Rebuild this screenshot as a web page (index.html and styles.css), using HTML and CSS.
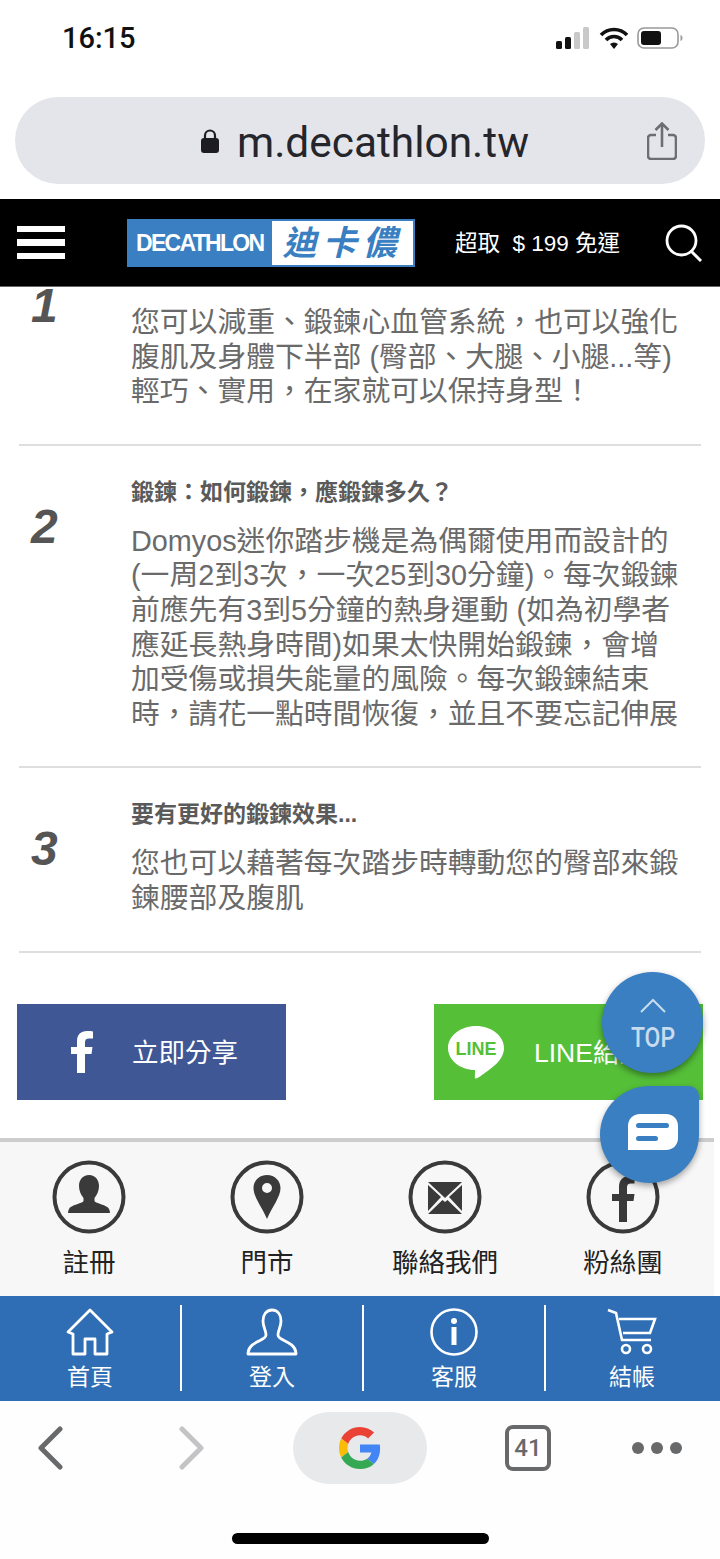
FILE: index.html
```html
<!DOCTYPE html>
<html lang="zh-Hant">
<head>
  <meta charset="UTF-8">
  <meta name="viewport" content="width=device-width, initial-scale=1.0">
  <title>Decathlon</title>
  <link rel="stylesheet" href="styles.css">
</head>
<body>
  <div class="status-bar">
    <span class="time">16:15</span>
    <div class="status-icons">
      <svg width="36" height="22" viewBox="0 0 36 22"><rect x="1" y="14" width="6" height="8" rx="1.5" fill="#111"/><rect x="10" y="10" width="6" height="12" rx="1.5" fill="#111"/><rect x="19" y="5" width="6" height="17" rx="1.5" fill="#c9c9c9"/><rect x="28" y="0" width="6" height="22" rx="1.5" fill="#c9c9c9"/></svg>
      <svg width="30" height="22" viewBox="0 0 30 22"><path d="M2 8a18 18 0 0 1 26 0M7 13a11 11 0 0 1 16 0" fill="none" stroke="#111" stroke-width="3.6"/><path d="M11 17a6 6 0 0 1 8 0l-4 5z" fill="#111"/></svg>
      <svg width="46" height="22" viewBox="0 0 46 22"><rect x="1" y="1" width="40" height="20" rx="6" fill="none" stroke="#999" stroke-width="1.6"/><rect x="4" y="4" width="20" height="14" rx="3" fill="#111"/><path d="M43.500 8v6c1.500-.5 2-1.700 2-3s-.5-2.500-2-3z" fill="#999"/></svg>
    </div>
  </div>

  <div class="url-wrap">
    <div class="url-bar">
      <svg class="lock" width="20" height="26" viewBox="0 0 20 26"><path d="M5 11V7.500a5 5 0 0 1 10 0V11" fill="none" stroke="#1c1c22" stroke-width="2.200"/><rect x="1" y="10" width="18" height="15" rx="3" fill="#1c1c22"/></svg>
      <span class="url-text">m.decathlon.tw</span>
      <svg class="share" width="30" height="38" viewBox="0 0 30 38"><path d="M9 13H4a3 3 0 0 0-3 3v18a3 3 0 0 0 3 3h22a3 3 0 0 0 3-3V16a3 3 0 0 0-3-3h-5" fill="none" stroke="#6b6e73" stroke-width="2.600"/><path d="M15 25V2M8.500 8 15 1.500 21.500 8" fill="none" stroke="#6b6e73" stroke-width="2.600"/></svg>
    </div>
  </div>

  <header class="site-header">
    <div class="burger"><span></span><span></span><span></span></div>
    <div class="logo">
      <span class="logo-en">DECATHLON</span>
      <span class="logo-zh">迪卡儂</span>
    </div>
    <span class="promo">超取 &nbsp;$ 199 免運</span>
    <svg class="search" width="38" height="38" viewBox="0 0 38 38"><circle cx="16.500" cy="16.500" r="14.500" fill="none" stroke="#fff" stroke-width="2.800"/><path d="M26 27l10 10" stroke="#fff" stroke-width="3"/></svg>
  </header>

  <main class="content">
    <section class="step step-cut">
      <div class="step-num">1</div>
      <div class="step-body">
        <p class="step-text">您可以減重、鍛鍊心血管系統，也可以強化<br>腹肌及身體下半部 (臀部、大腿、小腿...等)<br>輕巧、實用，在家就可以保持身型！</p>
      </div>
    </section>
    <section class="step">
      <div class="step-num">2</div>
      <div class="step-body">
        <h3 class="step-title">鍛鍊：如何鍛鍊，應鍛鍊多久？</h3>
        <p class="step-text">Domyos迷你踏步機是為偶爾使用而設計的<br>(一周2到3次，一次25到30分鐘)。每次鍛鍊<br>前應先有3到5分鐘的熱身運動 (如為初學者<br>應延長熱身時間)如果太快開始鍛鍊，會增<br>加受傷或損失能量的風險。每次鍛鍊結束<br>時，請花一點時間恢復，並且不要忘記伸展</p>
      </div>
    </section>
    <section class="step">
      <div class="step-num">3</div>
      <div class="step-body">
        <h3 class="step-title">要有更好的鍛鍊效果...</h3>
        <p class="step-text">您也可以藉著每次踏步時轉動您的臀部來鍛<br>鍊腰部及腹肌</p>
      </div>
    </section>

    <div class="share-row">
      <a class="share-btn share-fb">
        <svg width="24" height="42" viewBox="0 0 24 42"><path d="M7 42V23H1v-7h6v-6C7 3.500 11 0 17 0c2.500 0 4.800.2 6 .4v7h-4c-3 0-4 1.500-4 4V16h7.500l-1 7H15v19z" fill="#fff"/></svg>
        <span>立即分享</span>
      </a>
      <a class="share-btn share-line">
        <svg width="58" height="54" viewBox="0 0 58 54"><path d="M29 1c15.500 0 28 9.800 28 22 0 12-12 20-22 27-3 2-4.500 3.500-6.500 3.500-1 0-.5-2.500-.5-8.500C13 45 1 35 1 23 1 10.800 13.500 1 29 1z" fill="#fff"/><text x="29" y="29.500" text-anchor="middle" class="line-word">LINE</text></svg>
        <span>LINE給好友</span>
      </a>
    </div>
  </main>

  <footer class="quick-links">
    <a class="quick-link">
      <svg width="74" height="74" viewBox="0 0 74 74"><circle cx="37" cy="37" r="34.500" fill="none" stroke="#3a3a3a" stroke-width="4"/><path d="M37 15c6.500 0 10 5 10 11 0 5-2 9-4.500 12v3c1 2.500 13 4 14.500 8 1 2 1 4 1 4H16s0-2 1-4c1.500-4 13.500-5.500 14.500-8v-3C29 35 27 31 27 26c0-6 3.500-11 10-11z" fill="#3a3a3a"/></svg>
      <span>註冊</span>
    </a>
    <a class="quick-link">
      <svg width="74" height="74" viewBox="0 0 74 74"><circle cx="37" cy="37" r="34.500" fill="none" stroke="#3a3a3a" stroke-width="4"/><path fill-rule="evenodd" d="M37 15c8 0 13.500 6 13.500 13 0 9-8.500 19-13.500 31-5-12-13.500-22-13.500-31 0-7 5.500-13 13.500-13zm0 8a5 5 0 1 0 0 10 5 5 0 0 0 0-10z" fill="#3a3a3a"/></svg>
      <span>門市</span>
    </a>
    <a class="quick-link">
      <svg width="74" height="74" viewBox="0 0 74 74"><circle cx="37" cy="37" r="34.500" fill="none" stroke="#3a3a3a" stroke-width="4"/><path d="M20 22h34L37 38zM20 25v26l13-14zM54 25v26L41 37zM20 54h34L39.500 40 37 42l-2.500-2z" fill="#3a3a3a"/></svg>
      <span>聯絡我們</span>
    </a>
    <a class="quick-link">
      <svg width="74" height="74" viewBox="0 0 74 74"><circle cx="37" cy="37" r="34.500" fill="none" stroke="#3a3a3a" stroke-width="4"/><path d="M33 62V41h-7v-7h7v-7c0-7 4-11 10-11 2.500 0 4.500.2 5.500.4v7H45c-3 0-4 1.500-4 4V34h7.500l-1 7H41v21z" fill="#3a3a3a"/></svg>
      <span>粉絲團</span>
    </a>
  </footer>

  <nav class="bottom-nav">
    <a class="nav-item">
      <svg width="50" height="48" viewBox="0 0 50 48"><path d="M3 24 25 2l22 22-5 2v20H30V31H20v15H8V26z" fill="none" stroke="#fff" stroke-width="2.800" stroke-linejoin="round"/></svg>
      <span>首頁</span>
    </a>
    <a class="nav-item">
      <svg width="52" height="48" viewBox="0 0 52 48"><path d="M26 2c6 0 9 5 9 11 0 6-3 9-3 14 0 6 17 6 18 18v1H2v-1c1-12 18-12 18-18 0-5-3-8-3-14C17 7 20 2 26 2z" fill="none" stroke="#fff" stroke-width="2.800" stroke-linejoin="round"/></svg>
      <span>登入</span>
    </a>
    <a class="nav-item">
      <svg width="48" height="48" viewBox="0 0 48 48"><circle cx="24" cy="24" r="22.500" fill="none" stroke="#fff" stroke-width="2.600"/><circle cx="24" cy="13" r="3" fill="#fff"/><rect x="21.500" y="19" width="5" height="18" fill="#fff"/></svg>
      <span>客服</span>
    </a>
    <a class="nav-item">
      <svg width="50" height="48" viewBox="0 0 50 48"><path d="M1 2l8 3 6 27h29M12 11h36l-5 14H16" fill="none" stroke="#fff" stroke-width="2.600"/><circle cx="19" cy="41" r="4" fill="none" stroke="#fff" stroke-width="2.600"/><circle cx="40" cy="41" r="4" fill="none" stroke="#fff" stroke-width="2.600"/></svg>
      <span>結帳</span>
    </a>
  </nav>

  <div class="browser-bar">
    <div class="browser-row">
      <svg width="26" height="44" viewBox="0 0 26 44"><path d="M23 3 4 22l19 19" fill="none" stroke="#68696b" stroke-width="5" stroke-linecap="round" stroke-linejoin="round"/></svg>
      <svg class="forward" width="26" height="44" viewBox="0 0 26 44"><path d="M3 3l19 19L3 41" fill="none" stroke="#c4c4c6" stroke-width="5" stroke-linecap="round" stroke-linejoin="round"/></svg>
      <div class="google-pill">
        <svg width="42" height="42" viewBox="0 0 48 48"><path fill="#EA4335" d="M24 9.500c3.540 0 6.710 1.220 9.210 3.600l6.850-6.850C35.900 2.380 30.470 0 24 0 14.620 0 6.510 5.380 2.560 13.220l7.980 6.190C12.430 13.720 17.740 9.500 24 9.500z"/><path fill="#4285F4" d="M46.980 24.550c0-1.570-.15-3.090-.38-4.550H24v9.020h12.940c-.58 2.960-2.260 5.480-4.780 7.180l7.730 6c4.510-4.180 7.090-10.360 7.090-17.650z"/><path fill="#FBBC05" d="M10.530 28.590c-.48-1.450-.76-2.990-.76-4.590s.27-3.140.76-4.590l-7.980-6.190C.92 16.460 0 20.120 0 24c0 3.880.92 7.540 2.560 10.780l7.970-6.190z"/><path fill="#34A853" d="M24 48c6.480 0 11.930-2.130 15.890-5.810l-7.730-6c-2.150 1.450-4.920 2.300-8.160 2.300-6.260 0-11.570-4.220-13.470-9.910l-7.980 6.190C6.510 42.620 14.620 48 24 48z"/></svg>
      </div>
      <div class="tab-count">41</div>
      <div class="more-dots"><span></span><span></span><span></span></div>
    </div>
    <div class="home-indicator"></div>
  </div>

  <a class="fab-top">
    <svg width="26" height="15" viewBox="0 0 26 15"><path d="M1 14 13 2l12 12" fill="none" stroke="#c9dcef" stroke-width="2"/></svg>
    <span>TOP</span>
  </a>
  <a class="fab-chat">
    <svg width="50" height="36" viewBox="0 0 50 36"><path d="M12 0h26c7 0 12 5 12 12v12c0 7-5 12-12 12H0V12C0 5 5 0 12 0z" fill="#fff"/><rect x="8" y="9" width="33" height="5" rx="2.500" fill="#3a7fc1"/><rect x="8" y="22" width="22" height="5" rx="2.500" fill="#3a7fc1"/></svg>
  </a>
</body>
</html>
```

FILE: styles.css
```css
* {
  box-sizing: border-box;
}

html, body {
  margin: 0;
  padding: 0;
}

body {
  position: relative;
  width: 720px;
  height: 1559px;
  overflow: hidden;
  display: flex;
  flex-direction: column;
  background: #fff;
  font-family: "Liberation Sans", "Noto Sans CJK TC", sans-serif;
}

svg {
  display: block;
  flex-shrink: 0;
}

/* phone status bar */
.status-bar {
  height: 76px;
  flex: none;
  display: flex;
  align-items: center;
  justify-content: space-between;
  padding: 0 37px 0 62px;
}

.time {
  font-family: Roboto, "Liberation Sans", sans-serif;
  font-size: 29px;
  font-weight: 500;
  color: #111;
}

.status-icons {
  display: flex;
  align-items: center;
  gap: 8px;
}

/* url bar */
.url-wrap {
  height: 123px;
  flex: none;
  padding: 21px 15px 0;
}

.url-bar {
  position: relative;
  height: 87px;
  border-radius: 44px;
  background: #e4e5ea;
  display: flex;
  align-items: center;
  padding-left: 185px;
}

.lock {
  margin-right: 17px;
}

.url-text {
  margin-top: 3px;
  font-family: Roboto, "Liberation Sans", sans-serif;
  font-size: 42.400px;
  color: #25262b;
}

.share {
  margin-left: auto;
  margin-right: 28px;
}

/* site header */
.site-header {
  height: 88px;
  flex: none;
  background: #000;
  border-bottom: 1px solid #666;
  display: flex;
  align-items: center;
  padding: 0 17px;
}

.burger {
  width: 48px;
  display: flex;
  flex-direction: column;
  gap: 7px;
}

.burger span {
  display: block;
  height: 6.500px;
  background: #fff;
}

.logo {
  width: 288px;
  height: 48px;
  margin-left: 62px;
  display: flex;
  background: #3a7fc1;
  padding: 2px;
}

.logo-en {
  width: 143px;
  font-size: 23px;
  font-weight: bold;
  letter-spacing: -1.700px;
  color: #fff;
  line-height: 44px;
  padding-left: 7px;
  white-space: nowrap;
  overflow: hidden;
}

.logo-zh {
  flex: 1;
  background: #fff;
  color: #3a7fc1;
  font-size: 34px;
  font-weight: bold;
  font-style: italic;
  line-height: 44px;
  letter-spacing: 6px;
  text-align: center;
  white-space: nowrap;
  overflow: hidden;
}

.promo {
  margin-left: 40px;
  margin-bottom: 3px;
  font-size: 22.500px;
  color: #fff;
  white-space: nowrap;
}

.search {
  margin-left: auto;
}

/* page content */
.content {
  flex: 1;
  min-height: 0;
  overflow: hidden;
}

.step {
  margin: 0 19px;
  padding: 29px 0 35px;
  display: flex;
  border-bottom: 2px solid #dedede;
  color: #6a6a6a;
}

.step-cut {
  padding-top: 18px;
}

.step-num {
  width: 112px;
  padding-left: 12px;
  margin-top: 26px;
  font-size: 48px;
  line-height: 52px;
  font-weight: bold;
  font-style: italic;
  color: #555;
}

.step-cut .step-num {
  margin-top: -25px;
}

.step-title {
  margin: 0 0 15px;
  font-size: 23px;
  line-height: 34px;
  font-weight: bold;
  color: #5a5a5a;
}

.step-text {
  margin: 0;
  font-size: 28.800px;
  line-height: 34.600px;
  white-space: nowrap;
}

.share-row {
  display: flex;
  justify-content: space-between;
  padding: 51px 17px 0;
}

.share-btn {
  width: 269px;
  height: 96px;
  display: flex;
  align-items: center;
  color: #fff;
  font-size: 26.500px;
  overflow: hidden;
  white-space: nowrap;
}

.share-btn span {
  margin-bottom: 3px;
}

.share-fb {
  background: #405795;
  padding-left: 53px;
  gap: 38px;
}

.share-line {
  background: #55bf38;
  padding-left: 13px;
  gap: 29px;
}

.line-word {
  font-family: "Liberation Sans", sans-serif;
  font-size: 18px;
  font-weight: bold;
  fill: #55bf38;
}

/* footer links */
.quick-links {
  width: 714px;
  height: 158px;
  flex: none;
  background: #f7f7f7;
  border-top: 4px solid #cdcdcd;
  padding-right: 2px;
  display: grid;
  grid-template-columns: repeat(4, 1fr);
}

.quick-link {
  padding-top: 18px;
  display: flex;
  flex-direction: column;
  align-items: center;
  color: #222;
  font-size: 26.500px;
  line-height: 36px;
  gap: 11px;
}

/* blue nav */
.bottom-nav {
  height: 105px;
  flex: none;
  background: #2f6eb5;
  display: grid;
  grid-template-columns: 182px 182px 182px 174px;
  align-items: center;
}

.nav-item {
  height: 86px;
  display: flex;
  flex-direction: column;
  align-items: center;
  color: #fff;
  font-size: 23px;
  line-height: 30px;
  border-right: 2px solid #fff;
  margin-top: -1px;
  padding-top: 3px;
  gap: 6px;
}

.nav-item:last-child {
  border-right: 0;
  padding-right: 2px;
}

/* browser toolbar */
.browser-bar {
  height: 158px;
  flex: none;
  background: #fefefe;
  position: relative;
}

.browser-row {
  height: 72px;
  position: relative;
  top: 11px;
  padding-left: 37px;
  display: flex;
  align-items: center;
}

.forward {
  margin-left: 116px;
}

.google-pill {
  width: 134px;
  height: 72px;
  margin-left: 88px;
  border-radius: 36px;
  background: #e8e9eb;
  display: flex;
  align-items: center;
  justify-content: center;
}

.tab-count {
  width: 46px;
  height: 46px;
  margin-left: 78px;
  border: 4.500px solid #68696b;
  border-radius: 8px;
  display: flex;
  align-items: center;
  justify-content: center;
  color: #68696b;
  font-family: Roboto, sans-serif;
  font-size: 24px;
  font-weight: 500;
}

.more-dots {
  margin-left: 81px;
  display: flex;
  gap: 7px;
}

.more-dots span {
  width: 12px;
  height: 12px;
  border-radius: 50%;
  background: #68696b;
}

.home-indicator {
  position: absolute;
  left: 232px;
  top: 132px;
  width: 257px;
  height: 11px;
  border-radius: 6px;
  background: #000;
}

/* floating buttons */
.fab-top {
  position: absolute;
  left: 602px;
  top: 972px;
  width: 101px;
  height: 101px;
  border-radius: 50%;
  background: #3a7fc1;
  box-shadow: 0 3px 6px rgba(0, 0, 0, 0.4);
  display: flex;
  flex-direction: column;
  align-items: center;
  padding-top: 26px;
  color: #c9dcef;
}

.fab-top span {
  font-family: Roboto, sans-serif;
  font-size: 27px;
  line-height: 30px;
  font-weight: 500;
  margin-top: 10px;
  transform: scaleX(0.85);
}

.fab-chat {
  position: absolute;
  left: 600px;
  top: 1086px;
  width: 99px;
  height: 97px;
  padding: 0 0 6px 6px;
  border-radius: 50% 10px 50% 50%;
  background: #3a7fc1;
  box-shadow: 0 3px 6px rgba(0, 0, 0, 0.35);
  display: flex;
  align-items: center;
  justify-content: center;
}
```
